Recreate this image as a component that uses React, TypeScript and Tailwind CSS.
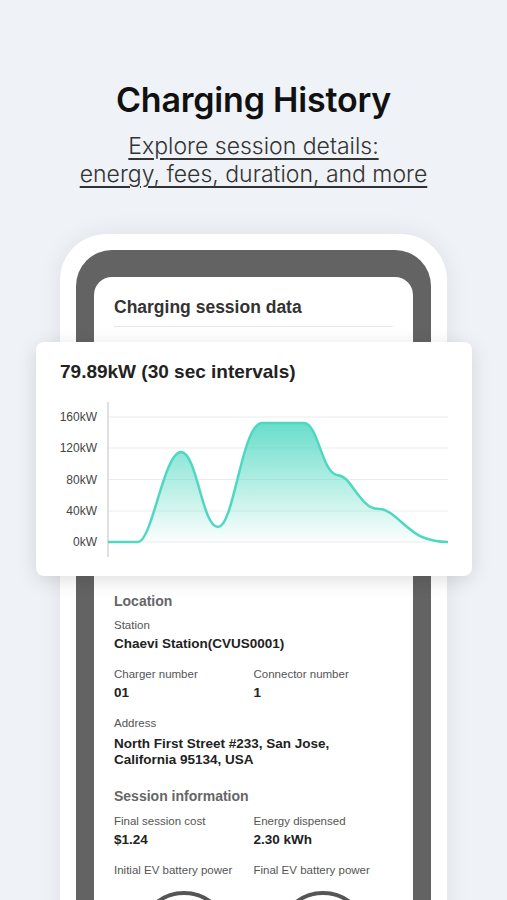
import React from "react";

const ticks = [
  { label: "160kW", y: 22 },
  { label: "120kW", y: 53 },
  { label: "80kW", y: 84.5 },
  { label: "40kW", y: 116 },
  { label: "0kW", y: 147 },
];

const curve =
  "M72,147 L102,147 C116,147 128,57 145,57 C161,57 166,132 182,132 C198,132 206,28 226,28 L268,28 C282,28 286,78 301,80 C311,81 314,90 324,102 C332,112 336,114 344,114 C356,114 370,135 386,142 C396,146 402,147 412,147";

function PowerChart() {
  return (
    <svg width="436" height="170" viewBox="0 0 436 170" className="block">
      <defs>
        <linearGradient id="fillGrad" x1="0" y1="28" x2="0" y2="147" gradientUnits="userSpaceOnUse">
          <stop offset="0" stopColor="#4fd8c1" stopOpacity="0.85" />
          <stop offset="1" stopColor="#4fd8c1" stopOpacity="0.02" />
        </linearGradient>
      </defs>
      {ticks.map((t) => (
        <g key={t.label}>
          <line x1="72" y1={t.y} x2="412" y2={t.y} stroke="#ececec" strokeWidth="1" />
          <text
            x="61"
            y={t.y + 4}
            textAnchor="end"
            fontSize="12"
            fill="#444"
            fontFamily="'Liberation Sans', Arial, sans-serif"
          >
            {t.label}
          </text>
        </g>
      ))}
      <line x1="72" y1="7" x2="72" y2="162" stroke="#d6d6d6" strokeWidth="1.5" />
      <path d={`${curve} L412,147 L72,147 Z`} fill="url(#fillGrad)" />
      <path d={curve} fill="none" stroke="#4fd8c1" strokeWidth="2.5" strokeLinejoin="round" />
    </svg>
  );
}

function Field({ label, value }: { label: string; value: React.ReactNode }) {
  return (
    <div>
      <div className="text-[11.5px] leading-[14px] text-[#555]">{label}</div>
      <div className="mt-1 text-[13.5px] leading-[16px] font-bold text-[#222]">{value}</div>
    </div>
  );
}

export default function App() {
  return (
    <div className="w-[507px] h-[900px] overflow-hidden bg-[#eff2f6] flex flex-col items-center pt-[80px] font-['Inter',sans-serif]">
      {/* Heading */}
      <h1 className="text-[34px] leading-[40px] font-semibold text-[#111] tracking-[-0.2px]">
        Charging History
      </h1>
      <p className="mt-[12px] text-center text-[23px] leading-[28px] font-light text-[#333] underline underline-offset-[4px] decoration-[1.5px]">
        Explore session details:
        <br />
        energy, fees, duration, and more
      </p>

      {/* Phone */}
      <div className="mt-[46px] w-[387px] bg-white rounded-[46px] p-4 shadow-[0_0_24px_rgba(0,0,0,0.08)]">
        <div className="bg-[#636363] rounded-[36px] px-[18px] pt-[27px]">
          <div className="bg-white rounded-[18px] px-5 pt-5 pb-10 font-['Liberation_Sans',Arial,sans-serif]">
            <h2 className="text-[17.5px] leading-[20px] font-bold text-[#333]">Charging session data</h2>
            <div className="mt-[9px] border-t border-[#e6e6e6]" />

            {/* Chart card */}
            <div className="mt-[15px] -ml-[78px] w-[436px] bg-white rounded-[8px] shadow-[0_4px_20px_rgba(0,0,0,0.13)] pt-[18px] pb-[11px]">
              <div className="pl-6 text-[19px] leading-[24px] font-bold text-[#222]">79.89kW (30 sec intervals)</div>
              <div className="mt-[11px]">
                <PowerChart />
              </div>
            </div>

            {/* Location */}
            <div className="mt-[16px] text-[14px] leading-[18px] font-bold text-[#666]">Location</div>
            <div className="mt-2">
              <Field label="Station" value="Chaevi Station(CVUS0001)" />
            </div>
            <div className="mt-[15px] grid grid-cols-2">
              <Field label="Charger number" value="01" />
              <Field label="Connector number" value="1" />
            </div>
            <div className="mt-[15px]">
              <div className="text-[11.5px] leading-[14px] text-[#555]">Address</div>
              <div className="mt-[6px] text-[13.5px] leading-[16px] font-bold text-[#222]">
                North First Street #233, San Jose,
                <br />
                California 95134, USA
              </div>
            </div>

            {/* Session */}
            <div className="mt-[19px] text-[14px] leading-[18px] font-bold text-[#666]">Session information</div>
            <div className="mt-[9px] grid grid-cols-2">
              <Field label="Final session cost" value="$1.24" />
              <Field label="Energy dispensed" value="2.30 kWh" />
            </div>
            <div className="mt-[15px] grid grid-cols-2">
              <div className="text-[11.5px] leading-[14px] text-[#555]">Initial EV battery power</div>
              <div className="text-[11.5px] leading-[14px] text-[#555]">Final EV battery power</div>
            </div>
            <div className="mt-[14px] grid grid-cols-2">
              <div className="flex justify-center">
                <div className="w-[92px] h-[92px] rounded-full border-4 border-[#555]" />
              </div>
              <div className="flex justify-center">
                <div className="w-[92px] h-[92px] rounded-full border-4 border-[#555]" />
              </div>
            </div>
          </div>
        </div>
      </div>
    </div>
  );
}
